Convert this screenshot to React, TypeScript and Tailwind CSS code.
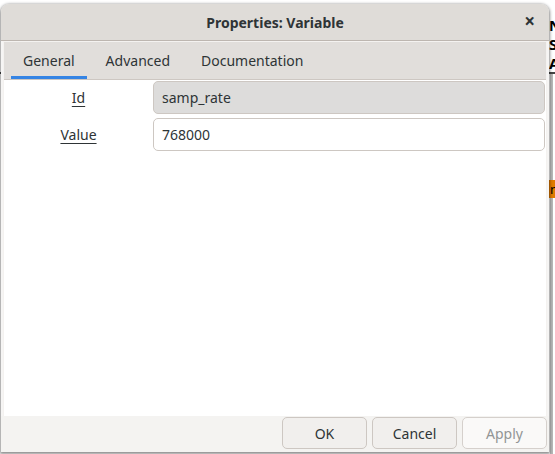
import React from 'react';

const font = { fontFamily: '"Noto Sans", "Open Sans", Arial, sans-serif' };

const tabs = ['General', 'Advanced', 'Documentation'];

const Row: React.FC<{ label: string; value: string; readOnly?: boolean }> = ({ label, value, readOnly }) => (
  <div className="flex items-center">
    <div className="w-[149px] shrink-0 text-center">
      <span className="underline underline-offset-[3px] decoration-1">{label}</span>
    </div>
    <div
      className={`flex-1 h-[33px] mr-[1px] rounded-[5px] border flex items-center px-[8px] ${
        readOnly ? 'bg-[#dddcdb] border-[#cdc7c2]' : 'bg-white border-[#cdc7c2]'
      }`}
    >
      {value}
    </div>
  </div>
);

const Button: React.FC<{ children: React.ReactNode; disabled?: boolean }> = ({ children, disabled }) => (
  <button
    className={`w-[85px] h-[32px] rounded-[5px] border border-[#cdc7c2] text-[14px] ${
      disabled ? 'bg-[#faf9f8] text-[#929595] border-[#d5d0cc]' : 'bg-[#f1efed] text-[#2e3436]'
    }`}
  >
    {children}
  </button>
);

export default function App() {
  return (
    <div className="relative w-[555px] h-[454px] bg-white overflow-hidden text-[14px] text-[#2e3436]" style={font}>
      {/* desktop behind the dialog */}
      <div className="absolute left-0 right-0 top-[72px] h-[2px] bg-[#444]" />
      <div className="absolute left-[550px] top-[74px] bottom-0 w-[3px] bg-[#b8b8b8]" />
      <div className="absolute left-[549px] top-[180px] h-[18px] w-[10px] bg-[#e07a00] text-black text-[13px] leading-[18px] pl-[1px]">n</div>
      <div className="absolute left-[549px] top-[16px] flex flex-col text-black font-bold text-[15px] leading-[19px]">
        <span>N</span>
        <span>S</span>
        <span>A</span>
      </div>

      {/* dialog window */}
      <div className="absolute left-[1px] top-[4px] w-[548px] h-[448px] rounded-t-[8px] bg-[#f6f5f4] flex flex-col overflow-hidden shadow-[0_1px_3px_1px_rgba(0,0,0,0.45)]">
        <div className="relative h-[37px] shrink-0 bg-[#dfdcd8] border-b border-[#bdb6b0] flex items-center justify-center">
          <span className="font-bold text-[#2e3436]">Properties: Variable</span>
          <span className="absolute right-[14px] top-[8px] text-[19px] leading-[18px] font-bold text-[#2e3436]">×</span>
        </div>

        <div className="flex-1 flex flex-col mx-[2px] border-x border-t border-[#f4f2f0]">
          <div className="h-[38px] shrink-0 bg-[#e1dedb] border-b border-[#cdc7c2] flex items-stretch pl-[7px] gap-[7px]">
            {tabs.map((t, i) => (
              <div
                key={t}
                className={`px-[12px] flex items-center pt-[3px] border-b-[3px] ${
                  i === 0 ? 'border-[#3584e4]' : 'border-transparent'
                }`}
              >
                {t}
              </div>
            ))}
          </div>

          <div className="flex-1 bg-white flex flex-col gap-[4px] pt-[1px]">
            <Row label="Id" value="samp_rate" readOnly />
            <Row label="Value" value="768000" />
          </div>
        </div>

        <div className="h-[36px] shrink-0 bg-[#f4f3f1] flex justify-end gap-[5px] pr-[2px] pt-[1px]">
          <Button>OK</Button>
          <Button>Cancel</Button>
          <Button disabled>Apply</Button>
        </div>
      </div>
    </div>
  );
}
